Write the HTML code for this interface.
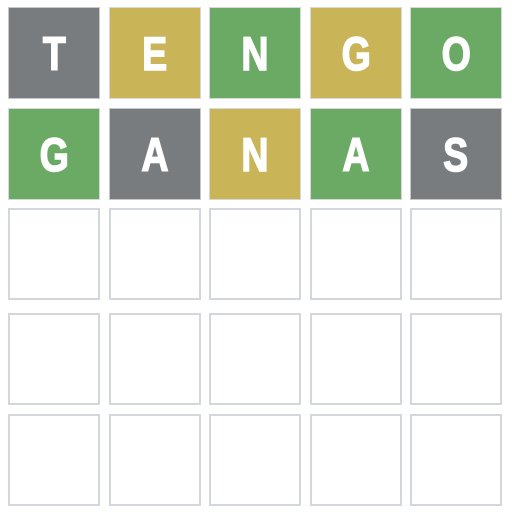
<!DOCTYPE html>
<html><head><style>
body{margin:0;width:512px;height:512px;background:#fff;position:relative;overflow:hidden}
.t{position:absolute;width:92px;height:92px;box-sizing:border-box;display:flex;align-items:center;justify-content:center;font-family:"Liberation Sans",sans-serif;font-weight:bold;font-size:47px;color:#fff;-webkit-text-stroke:1.5px #fff}
.t span{display:inline-block;transform:scaleX(0.8)}
.e{border:2px solid #d3d6da;background:#fff}
.g{background:#787c7e;border:1px solid #c8c8c8}.y{background:#c9b458;border:1px solid #d8d8d8}.n{background:#6aaa64;border:1px solid #d8d8d8}
</style></head><body>
<div class="t g" style="left:8px;top:7px"><span>T</span></div>
<div class="t y" style="left:109px;top:7px"><span>E</span></div>
<div class="t n" style="left:209px;top:7px"><span>N</span></div>
<div class="t y" style="left:310px;top:7px"><span>G</span></div>
<div class="t n" style="left:410px;top:7px"><span>O</span></div>
<div class="t n" style="left:8px;top:108px"><span>G</span></div>
<div class="t g" style="left:109px;top:108px"><span>A</span></div>
<div class="t y" style="left:209px;top:108px"><span>N</span></div>
<div class="t n" style="left:310px;top:108px"><span>A</span></div>
<div class="t g" style="left:410px;top:108px"><span>S</span></div>
<div class="t e" style="left:8px;top:208px"></div><div class="t e" style="left:109px;top:208px"></div><div class="t e" style="left:209px;top:208px"></div><div class="t e" style="left:310px;top:208px"></div><div class="t e" style="left:410px;top:208px"></div>
<div class="t e" style="left:8px;top:313px"></div><div class="t e" style="left:109px;top:313px"></div><div class="t e" style="left:209px;top:313px"></div><div class="t e" style="left:310px;top:313px"></div><div class="t e" style="left:410px;top:313px"></div>
<div class="t e" style="left:8px;top:414px"></div><div class="t e" style="left:109px;top:414px"></div><div class="t e" style="left:209px;top:414px"></div><div class="t e" style="left:310px;top:414px"></div><div class="t e" style="left:410px;top:414px"></div>
</body></html>
